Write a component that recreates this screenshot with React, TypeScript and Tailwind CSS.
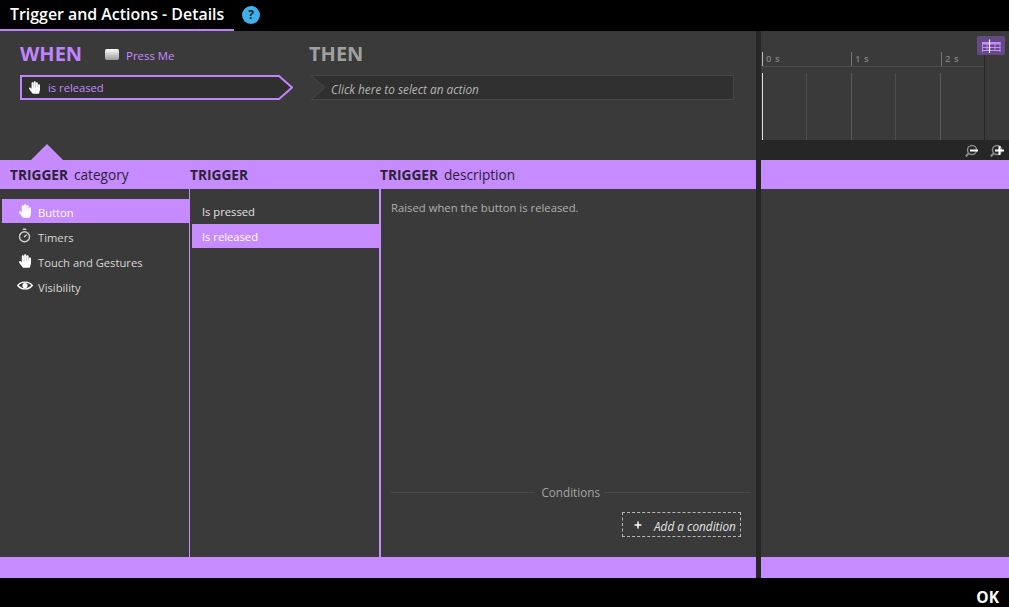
import { FaHandPaper } from "react-icons/fa";
import { Timer, Plus } from "lucide-react";

const font = { fontFamily: '"Open Sans", "Noto Sans", sans-serif' };

function ZoomIcon({ plus }: { plus?: boolean }) {
  return (
    <svg width="16" height="14" viewBox="0 0 16 14" fill="none">
      <circle cx="7" cy="6" r="4.5" stroke="#8a8a8a" strokeWidth="1.5" />
      <path d="M3.5 9.5 L0.8 12.5" stroke="#8a8a8a" strokeWidth="2" />
      <path d={plus ? "M5 6.5h9M9.5 2v9" : "M5 6.5h8"} stroke="#fff" strokeWidth="2" />
    </svg>
  );
}

function EyeIcon() {
  return (
    <svg width="16" height="11" viewBox="0 0 16 11" fill="none">
      <path d="M0.8 5.5 C4 1 12 1 15.2 5.5 C12 10 4 10 0.8 5.5 Z" stroke="#fff" strokeWidth="1.4" />
      <circle cx="8" cy="5.5" r="2.6" fill="#fff" />
    </svg>
  );
}

function CategoryRow({ icon, label, active }: { icon: React.ReactNode; label: string; active?: boolean }) {
  return (
    <div className={`mb-[1px] ml-[2px] flex h-[24px] items-center ${active ? "bg-[#c68bff] text-white" : "text-[#d8d8d8]"}`}>
      <div className="flex w-[36px] justify-center pl-[9px] pb-[1px] text-white">{icon}</div>
      <span className="pt-[5px] text-[11.2px]">{label}</span>
    </div>
  );
}

export default function App() {
  return (
    <div className="flex h-[607px] w-[1009px] flex-col overflow-hidden bg-black" style={font}>
      {/* Title bar */}
      <div className="flex h-[31px] shrink-0 items-start">
        <div className="flex h-[31px] w-[234px] items-center border-b-2 border-[#bd84f5] pt-[1px] pl-[10px] text-[15.9px] font-semibold whitespace-nowrap text-white">
          Trigger and Actions - Details
        </div>
        <div className="ml-[8px] mt-[6px] flex h-[18px] w-[18px] items-center justify-center rounded-full bg-[#3fb0ea] text-[12px] font-bold text-[#10242e]">
          ?
        </div>
      </div>

      <div className="flex min-h-0 flex-1">
        {/* Main panel */}
        <div className="flex w-[756px] shrink-0 flex-col bg-[#3a3a3a]">
          <div className="relative flex h-[129px] shrink-0 pl-[20px]">
            <div className="w-[289px] shrink-0">
              <div className="flex h-[44px] items-center pt-[2px]">
                <span className="text-[20px] font-bold text-[#c084fc]">WHEN</span>
                <div className="ml-[23px] h-[11px] w-[14px] rounded-[2px] bg-gradient-to-b from-white to-[#9a9a9a]" />
                <span className="ml-[7px] mt-[4px] text-[11.4px] text-[#c58aff]">Press Me</span>
              </div>
              <div className="relative h-[25px] w-[273px]">
                <svg className="absolute inset-0" width="273" height="25" viewBox="0 0 273 25" fill="none">
                  <path d="M1 1 H259 L272 12.5 L259 24 H1 Z" fill="#2f2f2f" stroke="#c084fc" strokeWidth="2" />
                </svg>
                <div className="relative flex h-full items-center pl-[9px] text-[#c58aff]">
                  <FaHandPaper className="h-[13px] w-[11px] text-white" />
                  <span className="ml-[8px] pt-[2px] text-[11.2px]">is released</span>
                </div>
              </div>
            </div>
            <div className="w-[425px] shrink-0">
              <div className="flex h-[44px] items-center pt-[2px]">
                <span className="text-[20px] font-bold text-[#a0a0a0]">THEN</span>
              </div>
              <div className="relative h-[25px] w-[425px]">
                <svg className="absolute inset-0" width="425" height="25" viewBox="0 0 425 25" fill="none">
                  <path d="M2 0.5 H424.5 V24.5 H2 L16 12.5 Z" fill="#303030" stroke="#464646" />
                </svg>
                <div className="relative flex h-full items-center pt-[5px] pl-[22px] text-[11.8px] text-[#b4b4b4] italic">
                  Click here to select an action
                </div>
              </div>
            </div>
            <div className="absolute bottom-0 left-[31px] h-0 w-0 border-x-[16px] border-b-[16px] border-x-transparent border-b-[#c68bff]" />
          </div>

          {/* Headers */}
          <div className="flex h-[29px] shrink-0 items-center bg-[#c68bff] pt-[2px] text-[13.6px] text-[#2a2333]">
            <div className="w-[190px] pl-[10px]">
              <span className="text-[13.7px] font-bold">TRIGGER</span>
              <span className="ml-[6px] font-medium">category</span>
            </div>
            <div className="w-[190px] text-[13.7px] font-bold">TRIGGER</div>
            <div>
              <span className="text-[13.7px] font-bold">TRIGGER</span>
              <span className="ml-[6px] font-medium">description</span>
            </div>
          </div>

          {/* Columns */}
          <div className="flex min-h-0 flex-1">
            <div className="w-[190px] shrink-0 border-r border-[#c68bff] pt-[10px]">
              <CategoryRow active icon={<FaHandPaper className="h-[14px] w-[12px]" />} label="Button" />
              <CategoryRow icon={<Timer className="h-[15px] w-[15px] text-[#d0d0d0]" strokeWidth={2.25} />} label="Timers" />
              <CategoryRow icon={<FaHandPaper className="h-[14px] w-[12px]" />} label="Touch and Gestures" />
              <CategoryRow icon={<EyeIcon />} label="Visibility" />
            </div>
            <div className="w-[191px] shrink-0 border-r-2 border-[#c68bff] pt-[10px] pl-[2px] text-[11.2px]">
              <div className="flex h-[25px] items-center pt-[2px] pl-[10px] text-[#e0e0e0]">Is pressed</div>
              <div className="flex h-[24px] items-center bg-[#c68bff] pt-[2px] pl-[10px] text-white">Is released</div>
            </div>
            <div className="flex min-w-0 flex-1 flex-col pt-[11px] pr-[5px] pl-[10px]">
              <div className="text-[11.3px] text-[#b0b0b0]">Raised when the button is released.</div>
              <div className="mt-auto flex items-center text-[11.7px] text-[#a4a4a4]">
                <div className="h-px flex-1 bg-[#4c4c4c]" />
                <span className="ml-[6px] mr-[4px] translate-y-[1px]">Conditions</span>
                <div className="h-px w-[147px] bg-[#4c4c4c]" />
              </div>
              <div className="mt-[11px] mb-[20px] flex justify-end pr-[10px]">
                <div className="flex h-[25px] w-[119px] items-center border border-dashed border-[#b8b8b8] text-[11.8px] text-[#e4e4e4] italic">
                  <Plus className="ml-[10px] h-[10px] w-[10px] text-white" strokeWidth={3.5} />
                  <span className="ml-[11px] pt-[4px]">Add a condition</span>
                </div>
              </div>
            </div>
          </div>
          <div className="h-[21px] shrink-0 bg-[#c68bff]" />
        </div>

        {/* Splitter */}
        <div className="w-[5px] shrink-0 bg-[#262626]" />

        {/* Timeline panel */}
        <div className="flex min-w-0 flex-1 flex-col bg-[#3a3a3a]">
          <div className="relative h-[109px] shrink-0">
            <div className="absolute top-[21px] left-[1px] flex h-[15px] w-[222px] border-b border-[#4e4e4e] text-[9.5px] font-semibold tracking-[0.5px] text-[#808080]">
              <div className="w-[89px] border-l border-[#bbb] pl-[3px] leading-[13px]">0 s</div>
              <div className="w-[90px] border-l border-[#777] pl-[3px] leading-[13px]">1 s</div>
              <div className="flex-1 border-l border-[#777] pl-[3px] leading-[13px]">2 s</div>
            </div>
            <div className="absolute top-[42px] left-[1px] flex h-[67px]">
              <div className="w-[44px] border-l border-[#ddd]" />
              <div className="w-[45px] border-l border-[#4e4e4e]" />
              <div className="w-[44px] border-l border-[#5c5c5c]" />
              <div className="w-[45px] border-l border-[#4e4e4e]" />
              <div className="w-[43px] border-l border-[#5c5c5c]" />
            </div>
            <div className="absolute top-[24px] left-[223px] h-[85px] w-px bg-[#262626]" />
            <div className="absolute top-[5px] right-[4px] flex h-[19px] w-[28px] items-center justify-center rounded-[2px] bg-[#644a84]">
              <svg width="19" height="14" viewBox="0 0 19 14" fill="none">
                <path d="M0 3h18.5v2.5H0z" fill="#c58aff" />
                <path d="M0.5 3v10M18 3v10M0 8.5h18.5M0 11.5h18.5M5 5v7M13 5v7" stroke="#c58aff" />
                <path d="M7.5 0.5v13.5" stroke="#fff" strokeWidth="1.2" />
              </svg>
            </div>
          </div>
          <div className="flex h-[20px] shrink-0 items-center justify-end gap-[9px] bg-[#262626] pt-[2px] pr-[3px]">
            <ZoomIcon />
            <ZoomIcon plus />
          </div>
          <div className="h-[29px] shrink-0 bg-[#c68bff]" />
          <div className="flex-1" />
          <div className="h-[21px] shrink-0 bg-[#c68bff]" />
        </div>
      </div>

      {/* Footer */}
      <div className="flex h-[29px] shrink-0 items-end justify-end bg-black pr-[10px] pb-[2px] text-[15.5px] leading-[15px] font-bold text-white">
        OK
      </div>
    </div>
  );
}
